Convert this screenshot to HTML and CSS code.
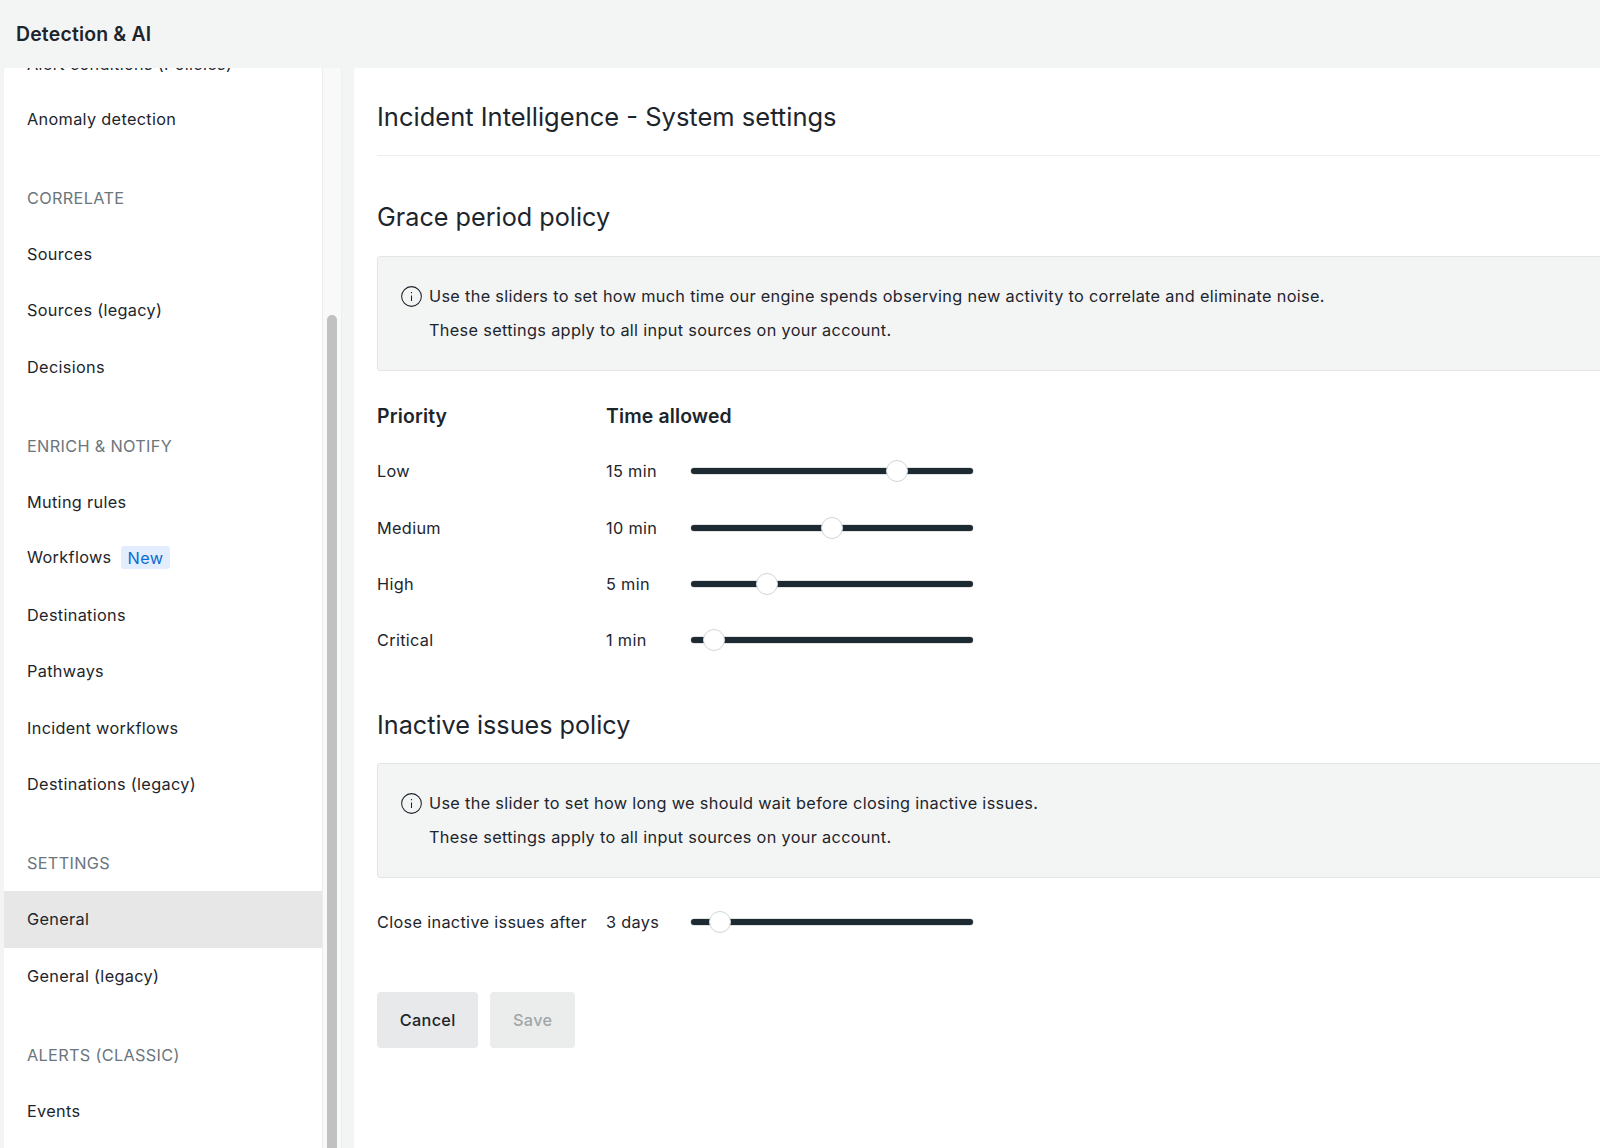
FILE: index.html
```html
<!DOCTYPE html>
<html lang="en">

<head>
  <meta charset="UTF-8">
  <meta name="viewport" content="width=device-width, initial-scale=1.0">
  <title>Detection &amp; AI</title>
  <link rel="stylesheet" href="styles.css">
</head>

<body>
  <header class="top-bar">Detection &amp; AI</header>
  <div class="layout">
    <nav class="side-nav">
      <div class="side-list">
        <a class="nav-item nav-item--clipped">Alert conditions (Policies)</a>
        <a class="nav-item">Anomaly detection</a>
        <div class="nav-section">CORRELATE</div>
        <a class="nav-item">Sources</a>
        <a class="nav-item">Sources (legacy)</a>
        <a class="nav-item">Decisions</a>
        <div class="nav-section">ENRICH &amp; NOTIFY</div>
        <a class="nav-item">Muting rules</a>
        <a class="nav-item nav-item--badge">Workflows <span class="badge-new">New</span></a>
        <a class="nav-item">Destinations</a>
        <a class="nav-item">Pathways</a>
        <a class="nav-item">Incident workflows</a>
        <a class="nav-item">Destinations (legacy)</a>
        <div class="nav-section">SETTINGS</div>
        <a class="nav-item nav-item--active">General</a>
        <a class="nav-item">General (legacy)</a>
        <div class="nav-section">ALERTS (CLASSIC)</div>
        <a class="nav-item">Events</a>
      </div>
    </nav>
    <div class="scroll-track">
      <div class="scroll-thumb"></div>
    </div>

    <main class="content">
      <h1 class="page-title">Incident Intelligence - System settings</h1>

      <h2 class="policy-title">Grace period policy</h2>
      <div class="info-box">
        <div class="info-line">
          <svg class="info-icon" viewBox="0 0 20 20">
            <circle cx="10" cy="10" r="9.4" />
            <path d="M10 9v5.2M10 5.8v1.2" />
          </svg>
          Use the sliders to set how much time our engine spends observing new activity to correlate and eliminate noise.
        </div>
        <div class="info-line info-line--sub">These settings apply to all input sources on your account.</div>
      </div>

      <div class="slider-grid">
        <div class="grid-head">Priority</div>
        <div class="grid-head grid-head--wide">Time allowed</div>

        <div class="grid-row">Low</div>
        <div class="grid-row">15 min</div>
        <div class="slider"><span class="slider-thumb" style="left: 206px"></span></div>

        <div class="grid-row">Medium</div>
        <div class="grid-row">10 min</div>
        <div class="slider"><span class="slider-thumb" style="left: 141px"></span></div>

        <div class="grid-row">High</div>
        <div class="grid-row">5 min</div>
        <div class="slider"><span class="slider-thumb" style="left: 76px"></span></div>

        <div class="grid-row">Critical</div>
        <div class="grid-row">1 min</div>
        <div class="slider"><span class="slider-thumb" style="left: 23px"></span></div>
      </div>

      <h2 class="policy-title policy-title--second">Inactive issues policy</h2>
      <div class="info-box">
        <div class="info-line">
          <svg class="info-icon" viewBox="0 0 20 20">
            <circle cx="10" cy="10" r="9.4" />
            <path d="M10 9v5.2M10 5.8v1.2" />
          </svg>
          Use the slider to set how long we should wait before closing inactive issues.
        </div>
        <div class="info-line info-line--sub">These settings apply to all input sources on your account.</div>
      </div>

      <div class="slider-grid slider-grid--single">
        <div class="grid-row">Close inactive issues after</div>
        <div class="grid-row">3 days</div>
        <div class="slider"><span class="slider-thumb" style="left: 29px"></span></div>
      </div>

      <div class="form-actions">
        <button type="button" class="btn">Cancel</button>
        <button type="button" class="btn btn--disabled" disabled>Save</button>
      </div>
    </main>
  </div>
</body>

</html>
```

FILE: styles.css
```css
* {
  box-sizing: border-box;
}

html,
body {
  height: 100%;
}

body {
  margin: 0;
  overflow: hidden;
  background-color: #f3f4f4;
  color: #1d252c;
  font-family: Inter, "Liberation Sans", sans-serif;
  font-size: 16.3px;
  letter-spacing: .32px;
}

.top-bar {
  height: 68px;
  padding-left: 16px;
  line-height: 68px;
  font-size: 19.4px;
  font-weight: 600;
  letter-spacing: .2px;
}

.layout {
  display: flex;
  height: 1080px;
  padding-left: 4px;
}

/* sidebar */
.side-nav {
  width: 319px;
  flex-shrink: 0;
  overflow: hidden;
  background-color: #fff;
  border-right: 1px solid #ebecec;
  border-radius: 3px 0 0 0;
}

.side-list {
  margin-top: -31px;
}

.nav-item {
  display: flex;
  align-items: center;
  height: 56.4px;
  padding-left: 23px;
  white-space: nowrap;
}

.nav-item--clipped {
  height: 53.4px;
}

.nav-item--badge {
  padding-bottom: 3px;
}

.nav-item--active {
  background-color: #e7e7e7;
}

.nav-section {
  display: flex;
  align-items: center;
  height: 56.4px;
  margin-top: 22.6px;
  padding-left: 23px;
  color: #6b757c;
}

.badge-new {
  margin-left: 9px;
  padding: 2px 7px 1px;
  border-radius: 3px;
  background-color: #e2eefd;
  color: #0c6bd0;
}

.scroll-track {
  width: 19px;
  flex-shrink: 0;
  padding: 247px 4px 0;
  background-color: #f9f9f9;
  border-right: 1px solid #eeefef;
}

.scroll-thumb {
  height: 100%;
  border-radius: 6px 6px 0 0;
  background-color: #c1c1c1;
}

/* main */
.content {
  flex: 1;
  min-width: 0;
  margin-left: 12px;
  padding: 0 0 0 23px;
  overflow: hidden;
  background-color: #fff;
  border-radius: 3px 0 0 0;
}

.page-title {
  margin: 0;
  height: 88px;
  border-bottom: 1px solid #eceded;
  line-height: 98px;
  font-size: 25.5px;
  font-weight: 400;
  letter-spacing: 0;
}

.policy-title {
  margin: 0;
  padding-top: 44px;
  height: 100px;
  line-height: 34px;
  font-size: 25.2px;
  font-weight: 400;
  letter-spacing: 0;
}

.policy-title--second {
  padding-top: 39px;
  height: 94.5px;
}

.info-box {
  height: 115px;
  margin-right: -8px;
  padding: 22px 0 0 23px;
  background-color: #f3f4f4;
  border: 1px solid #e3e5e5;
  border-radius: 3px;
}

.info-line {
  display: flex;
  align-items: center;
  height: 34px;
  white-space: nowrap;
}

.info-line--sub {
  padding-left: 28px;
}

.info-icon {
  width: 21px;
  height: 21px;
  margin-right: 7px;
  flex-shrink: 0;
  fill: none;
  stroke: #1d252c;
  stroke-width: 1;
}

.slider-grid {
  display: grid;
  grid-template-columns: 229px 85px 282px;
  grid-template-rows: 53.5px;
  grid-auto-rows: 56.4px;
  align-items: center;
  margin-top: 18.5px;
}

.slider-grid--single {
  grid-template-rows: 56.4px;
  margin-top: 16px;
}

.grid-head {
  font-size: 19.4px;
  font-weight: 600;
  letter-spacing: .15px;
}

.grid-head--wide {
  grid-column: 2 / span 2;
}

.grid-row {
  white-space: nowrap;
}

.slider {
  position: relative;
  height: 6px;
  border-radius: 3px;
  background-color: #1d2a32;
  box-shadow: 0 0 0 0.5px #c4cacc;
}

.slider-thumb {
  position: absolute;
  top: -8px;
  width: 22px;
  height: 22px;
  margin-left: -11px;
  border: 1.5px solid #d1d5d7;
  border-radius: 50%;
  background-color: #fff;
}

.form-actions {
  display: flex;
  gap: 12px;
  margin-top: 42px;
}

.btn {
  height: 56px;
  padding: 0 22.7px;
  border: 0;
  border-radius: 4px;
  background-color: #e7e9eb;
  color: #1d252c;
  font-family: inherit;
  font-size: 16.3px;
  font-weight: 500;
  letter-spacing: inherit;
}

.btn--disabled {
  background-color: #ebeded;
  color: #a1a6a9;
}
```
